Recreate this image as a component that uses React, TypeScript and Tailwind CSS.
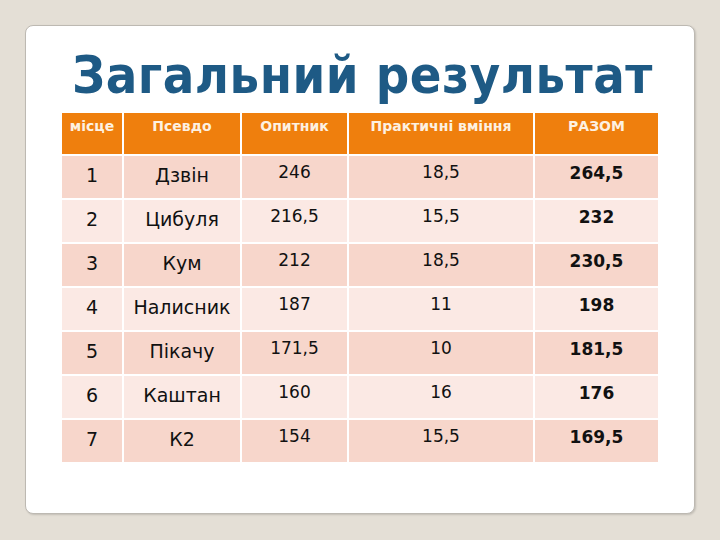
const rows = [
  ["1", "Дзвін", "246", "18,5", "264,5"],
  ["2", "Цибуля", "216,5", "15,5", "232"],
  ["3", "Кум", "212", "18,5", "230,5"],
  ["4", "Налисник", "187", "11", "198"],
  ["5", "Пікачу", "171,5", "10", "181,5"],
  ["6", "Каштан", "160", "16", "176"],
  ["7", "К2", "154", "15,5", "169,5"],
];

const heads = ["місце", "Псевдо", "Опитник", "Практичні вміння", "РАЗОМ"];

export default function App() {
  return (
    <div
      className="h-[540px] w-[720px] bg-[#e4dfd6] pl-[25px] pt-[25px]"
      style={{ fontFamily: '"DejaVu Sans", Verdana, sans-serif' }}
    >
      <div className="h-[489px] w-[670px] rounded-[8px] border border-[#bdb9b2] bg-white pl-[36px] pt-[19px] shadow-[1px_1px_2px_rgba(0,0,0,0.15)]">
        <h1 className="pl-[10px] font-stretch-condensed text-[52px] font-bold leading-[60px] tracking-[0.5px] text-[#1e5a85]">
          Загальний результат
        </h1>
        <div className="mt-[8px] grid w-[596px] grid-cols-[60px_116px_105px_184px_123px] gap-[2px]">
          {heads.map((h) => (
            <div
              key={h}
              className="h-[41px] bg-[#ef7f0d] pt-[3px] text-center text-[14px] font-bold text-[#fdf1e2]"
            >
              {h}
            </div>
          ))}
          {rows.map((r, i) =>
            r.map((c, j) => (
              <div
                key={i + "-" + j}
                className={
                  "h-[42px] text-center " +
                  (i % 2 === 0 ? "bg-[#f7d6cb] " : "bg-[#fbe9e4] ") +
                  (j < 2
                    ? "pt-[5px] text-[19px] text-[#111]"
                    : j === 4
                    ? "pt-[5px] text-[17px] font-bold text-[#111]"
                    : "pt-[4px] text-[17px] text-[#111]")
                }
              >
                {c}
              </div>
            ))
          )}
        </div>
      </div>
    </div>
  );
}
